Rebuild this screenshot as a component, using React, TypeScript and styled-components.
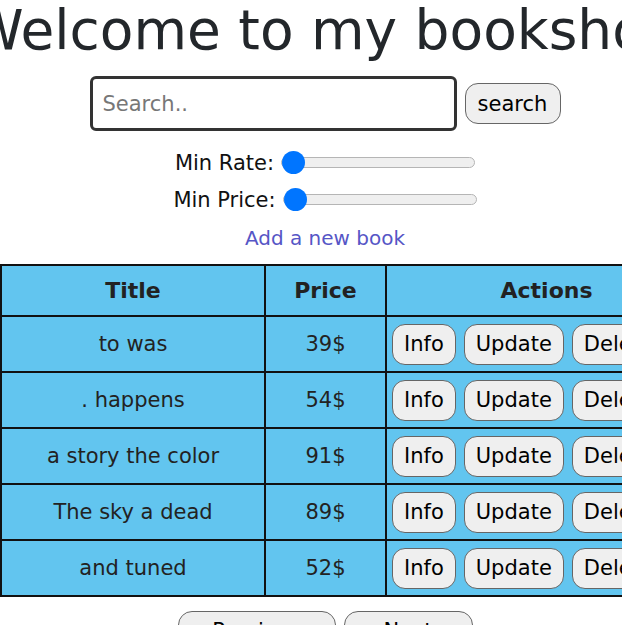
import React from "react";
import styled, { createGlobalStyle } from "styled-components";

const Global = createGlobalStyle`
  html, body { margin: 0; padding: 0; background: #fff; }
  body { font-family: "Comic Sans MS", "DejaVu Sans", sans-serif; color: #222; overflow: hidden; }
`;

const Page = styled.div`
  width: 650px;
  display: flex;
  flex-direction: column;
  align-items: center;
`;

const Title = styled.h1`
  margin: 0;
  font-size: 55px;
  line-height: 60px;
  font-weight: normal;
  white-space: nowrap;
  color: #23272b;
`;

const SearchBar = styled.div`
  display: flex;
  align-items: center;
  gap: 8px;
  margin-top: 16px;
`;

const SearchInput = styled.input`
  width: 367px;
  height: 55px;
  box-sizing: border-box;
  border: 3px solid #333;
  border-radius: 6px;
  padding: 0 10px;
  font-family: inherit;
  font-size: 21px;
  outline: none;
  &::placeholder { color: #777; }
`;

const Button = styled.button<{ $w?: number }>`
  height: 41px;
  box-sizing: border-box;
  padding: 0 11px;
  border: 1px solid #666;
  border-radius: 13px;
  background: #efefef;
  font-family: inherit;
  font-size: 21px;
  color: #000;
  cursor: pointer;
  ${(p) => (p.$w ? `width: ${p.$w}px;` : "")}
`;

const Filters = styled.div`
  display: flex;
  flex-direction: column;
  align-items: center;
  margin-top: 13px;
`;

const FilterRow = styled.label`
  display: flex;
  align-items: center;
  gap: 7px;
  height: 37px;
  font-size: 21px;
  color: #111;
`;

const Range = styled.input`
  -webkit-appearance: none;
  appearance: none;
  width: 194px;
  height: 24px;
  margin: 0;
  background: transparent;
  &::-webkit-slider-runnable-track {
    height: 11px;
    background: #efefef;
    border: 1px solid #b5b5b5;
    border-radius: 6px;
    box-sizing: border-box;
  }
  &::-webkit-slider-thumb {
    -webkit-appearance: none;
    width: 23px;
    height: 23px;
    border-radius: 50%;
    background: #0075ff;
    border: none;
    margin-top: -7px;
  }
`;

const AddLink = styled.a`
  margin-top: 5px;
  font-size: 20px;
  color: #5656c6;
  text-decoration: none;
  line-height: 30px;
`;

const TableWrap = styled.div`
  align-self: flex-start;
  margin-top: 11px;
`;

const Table = styled.table`
  border-collapse: collapse;
  background: #62c5ef;
  table-layout: fixed;
  width: 700px;
  border: 2px solid #111;
`;

const Th = styled.th<{ $w: number }>`
  width: ${(p) => p.$w}px;
  height: 49px;
  border: 2px solid #111;
  font-size: 22px;
  font-weight: bold;
  color: #222;
  text-align: center;
  padding: 0;
`;

const Td = styled.td<{ $left?: boolean }>`
  height: 54px;
  border: 2px solid #111;
  font-size: 21px;
  color: #222;
  text-align: ${(p) => (p.$left ? "left" : "center")};
  padding: ${(p) => (p.$left ? "0 0 0 5px" : "0")};
  white-space: nowrap;
  overflow: hidden;
`;

const Actions = styled.div`
  display: flex;
  gap: 8px;
`;

const Pager = styled.div`
  display: flex;
  gap: 8px;
  margin-top: 14px;
`;

const PageButton = styled(Button)`
  height: 40px;
  border-radius: 14px;
`;

const books = [
  { title: "to was", price: 39 },
  { title: ". happens", price: 54 },
  { title: "a story the color", price: 91 },
  { title: "The sky a dead", price: 89 },
  { title: "and tuned", price: 52 },
];

export default function App() {
  return (
    <>
      <Global />
      <Page>
        <Title>Welcome to my bookshop</Title>
        <SearchBar>
          <SearchInput placeholder="Search.." />
          <Button $w={96}>search</Button>
        </SearchBar>
        <Filters>
          <FilterRow>
            Min Rate: <Range type="range" min={0} max={5} defaultValue={0} />
          </FilterRow>
          <FilterRow>
            Min Price: <Range type="range" min={0} max={100} defaultValue={0} />
          </FilterRow>
        </Filters>
        <AddLink href="#">Add a new book</AddLink>
        <TableWrap>
          <Table>
            <thead>
              <tr>
                <Th $w={262}>Title</Th>
                <Th $w={119}>Price</Th>
                <Th $w={319}>Actions</Th>
              </tr>
            </thead>
            <tbody>
              {books.map((b) => (
                <tr key={b.title}>
                  <Td>{b.title}</Td>
                  <Td>{b.price}$</Td>
                  <Td $left>
                    <Actions>
                      <Button>Info</Button>
                      <Button>Update</Button>
                      <Button>Delete</Button>
                    </Actions>
                  </Td>
                </tr>
              ))}
            </tbody>
          </Table>
        </TableWrap>
        <Pager>
          <PageButton $w={158}>Previous</PageButton>
          <PageButton $w={129}>Next</PageButton>
        </Pager>
      </Page>
    </>
  );
}
